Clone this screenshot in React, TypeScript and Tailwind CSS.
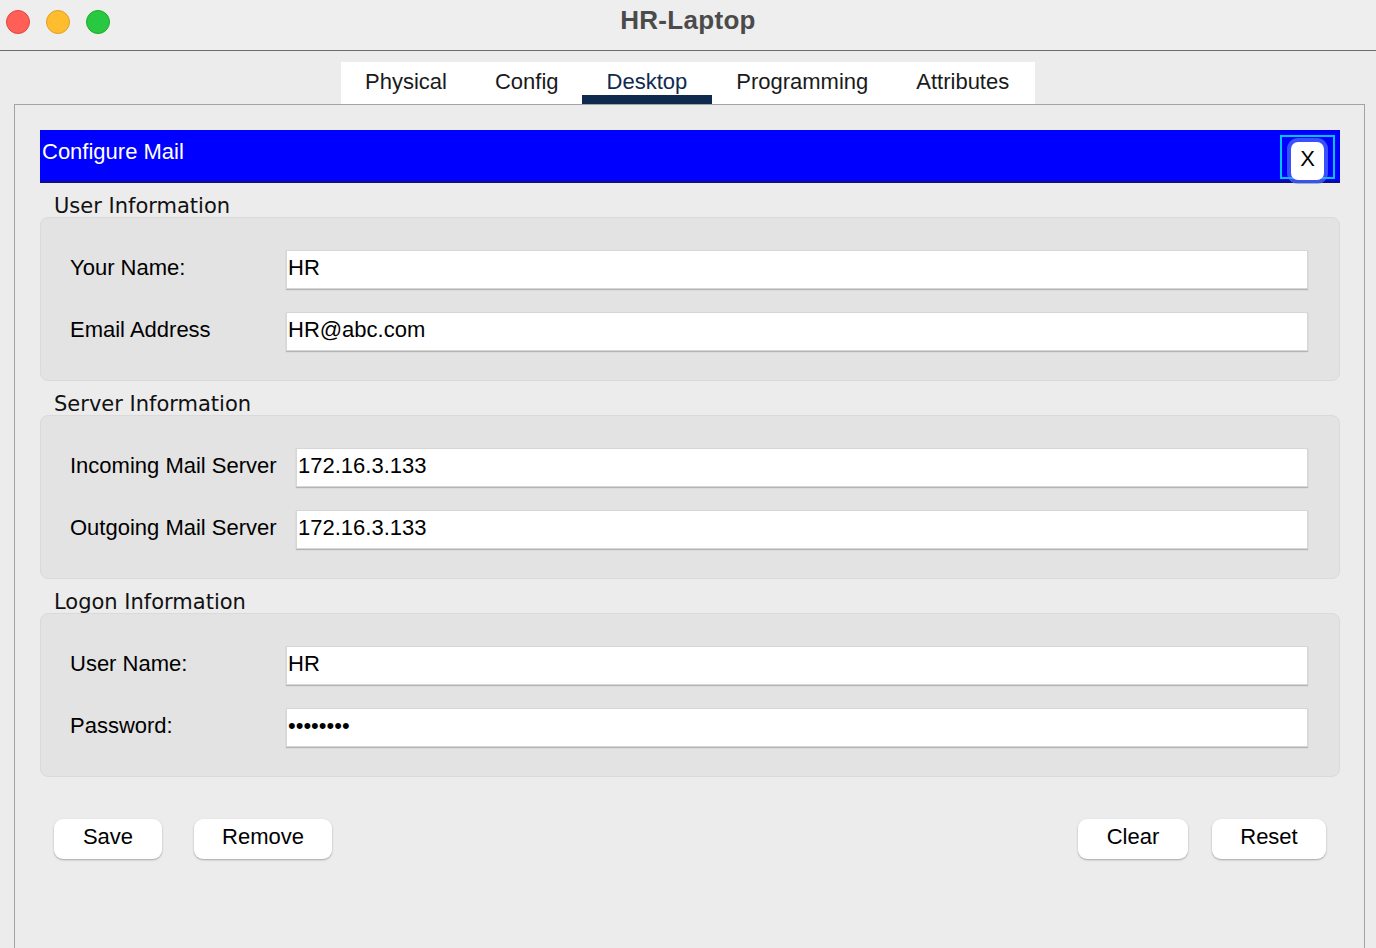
import React from 'react';

const font = { fontFamily: '"Liberation Sans", Arial, sans-serif' };

const tabs = ['Physical', 'Config', 'Desktop', 'Programming', 'Attributes'];

function Field({ label, value, labelWidth }: { label: string; value: string; labelWidth: string }) {
    return (
        <div className="flex items-center h-[39px]">
            <div className={`${labelWidth} shrink-0 text-[22px] text-black pb-[5px]`}>{label}</div>
            <div className="flex-1 h-[39px] bg-white border border-[#d6d6d6] shadow-[0_1px_1px_#b5b5b5] flex items-center pl-[1px] pb-[5px] text-[22px] text-black">
                {value}
            </div>
        </div>
    );
}

function Section({ title, rows, labelWidth }: { title: string; rows: [string, string][]; labelWidth: string }) {
    return (
        <div>
            <div className="h-[34px] pt-[12px] pl-[14px] text-[21px] leading-[22px] text-[#111]" style={{ fontFamily: '"DejaVu Sans", Verdana, sans-serif' }}>
                {title}
            </div>
            <div className="h-[164px] bg-[#e3e3e3] border border-[#dadada] rounded-[8px] pt-[32px] pl-[29px] pr-[31px] flex flex-col gap-[23px]">
                {rows.map(([l, v]) => (
                    <Field key={l} label={l} value={v} labelWidth={labelWidth} />
                ))}
            </div>
        </div>
    );
}

function PillButton({ label, width }: { label: string; width: string }) {
    return (
        <button className={`${width} h-[40px] bg-white rounded-[9px] shadow-[0_1px_2px_rgba(0,0,0,0.3)] text-[22px] text-black pb-[6px]`}>
            {label}
        </button>
    );
}

export default function App() {
    return (
        <div className="w-[1376px] h-[948px] bg-[#ececec] flex flex-col overflow-hidden" style={font}>
            {/* title bar */}
            <div className="h-[51px] shrink-0 bg-[#eeeeee] border-b border-[#6c6c6c] relative flex items-center justify-center">
                <div className="absolute left-[6px] top-[10px] flex gap-[16px]">
                    <span className="w-[24px] h-[24px] rounded-full bg-[#ff5f57] border border-[#e0443e]" />
                    <span className="w-[24px] h-[24px] rounded-full bg-[#febc2e] border border-[#dea123]" />
                    <span className="w-[24px] h-[24px] rounded-full bg-[#28c840] border border-[#1aab29]" />
                </div>
                <div className="text-[26px] font-bold text-[#4b4b4b] pb-[9px] tracking-[0.3px]">HR-Laptop</div>
            </div>

            {/* tabs */}
            <div className="pt-[11px] flex justify-center shrink-0">
                <div className="bg-white h-[42px] w-[694px] flex pl-[24px] text-[22px] text-[#1a1a1a]">
                    {tabs.map((t) => (
                        <div
                            key={t}
                            className={
                                t === 'Desktop'
                                    ? 'h-full px-[25px] -mx-[25px] mr-[24px] flex items-start pt-[3px] text-[#0f2a4f] border-b-[9px] border-[#0f2a4f] relative'
                                    : 'h-full flex items-start pt-[3px] mr-[48px]'
                            }
                        >
                            {t}
                        </div>
                    ))}
                </div>
            </div>

            {/* panel */}
            <div className="flex-1 ml-[14px] mr-[11px] border border-b-0 border-[#a3a3a3] pt-[25px] pl-[25px] pr-[24px]">
                <div className="h-[53px] bg-[#0000ff] border-b-[2px] border-[#10107a] flex items-start justify-between relative">
                    <div className="text-white text-[22px] pl-[2px] pt-[5px]">Configure Mail</div>
                    <div className="mt-[5px] mr-[5px] w-[55px] h-[44px] border-2 border-[#00c3ff] flex items-start justify-center pt-[5px]">
                        <button className="w-[33px] h-[38px] bg-white rounded-[7px] ring-[4px] ring-[#5f86ff]/60 text-[22px] text-black flex items-center justify-center pb-[6px]">
                            X
                        </button>
                    </div>
                </div>

                <Section title="User Information" labelWidth="w-[216px]" rows={[['Your Name:', 'HR'], ['Email Address', 'HR@abc.com']]} />
                <Section title="Server Information" labelWidth="w-[226px]" rows={[['Incoming Mail Server', '172.16.3.133'], ['Outgoing Mail Server', '172.16.3.133']]} />
                <Section title="Logon Information" labelWidth="w-[216px]" rows={[['User Name:', 'HR'], ['Password:', '••••••••']]} />

                <div className="mt-[42px] px-[14px] flex items-center">
                    <div className="flex gap-[32px]">
                        <PillButton label="Save" width="w-[108px]" />
                        <PillButton label="Remove" width="w-[138px]" />
                    </div>
                    <div className="flex-1" />
                    <div className="flex gap-[24px]">
                        <PillButton label="Clear" width="w-[110px]" />
                        <PillButton label="Reset" width="w-[114px]" />
                    </div>
                </div>
            </div>
        </div>
    );
}
